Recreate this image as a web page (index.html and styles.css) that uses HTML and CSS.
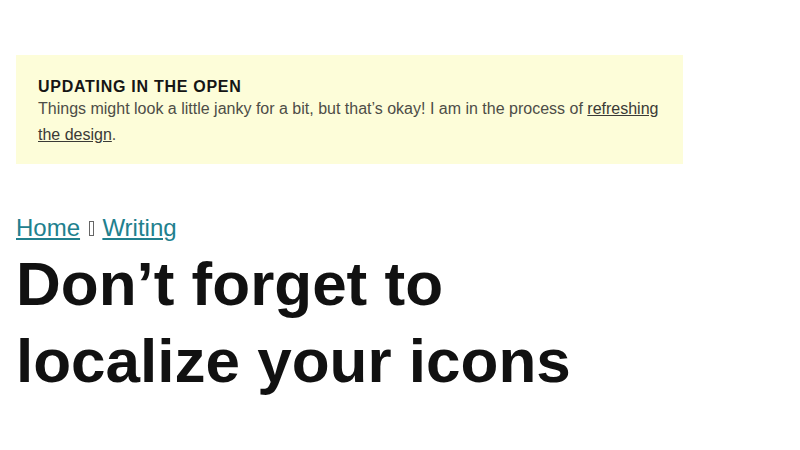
FILE: index.html
```html
<html>
<head>
<title>Don’t forget to localize your icons</title>
<link rel="stylesheet" href="styles.css">
</head>
<body>
<div class="page">
<aside class="notice">
<h2 class="notice-title">Updating in the open</h2>
<p class="notice-text">Things might look a little janky for a bit, but that’s okay! I am in the process of <a href="#">refreshing the design</a>.</p>
</aside>
<nav class="crumbs">
<a href="#">Home</a> <span class="crumb-sep" aria-hidden="true"></span> <a href="#">Writing</a>
</nav>
<h1>Don’t forget to localize your icons</h1>
</div>
</body>
</html>
```

FILE: styles.css
```css
body {
font-family: "Liberation Sans", Arial, sans-serif;
margin: 0;
background-color: #fff;
color: #111;
}
.page {
max-width: 667px;
padding: 55px 16px;
}
.notice {
background-color: #fdfdd9;
padding: 22px 22px 17px;
}
.notice-title {
margin: 0;
font-size: 16px;
line-height: 1.2;
font-weight: bold;
text-transform: uppercase;
letter-spacing: 0.045em;
color: #151515;
}
.notice-text {
margin: 0;
font-size: 16px;
line-height: 1.6;
color: #4d4d47;
}
.notice-text a {
color: #3a3a36;
}
.crumbs {
margin-top: 46px;
font-size: 24px;
line-height: 36px;
}
.crumbs a {
color: #21808e;
}
.crumb-sep {
display: inline-block;
width: 3px;
height: 13px;
border: 1px solid #666;
margin: 0 2px;
}
h1 {
margin: 0;
font-size: 62px;
line-height: 1.24;
font-weight: bold;
color: #111;
}
```
